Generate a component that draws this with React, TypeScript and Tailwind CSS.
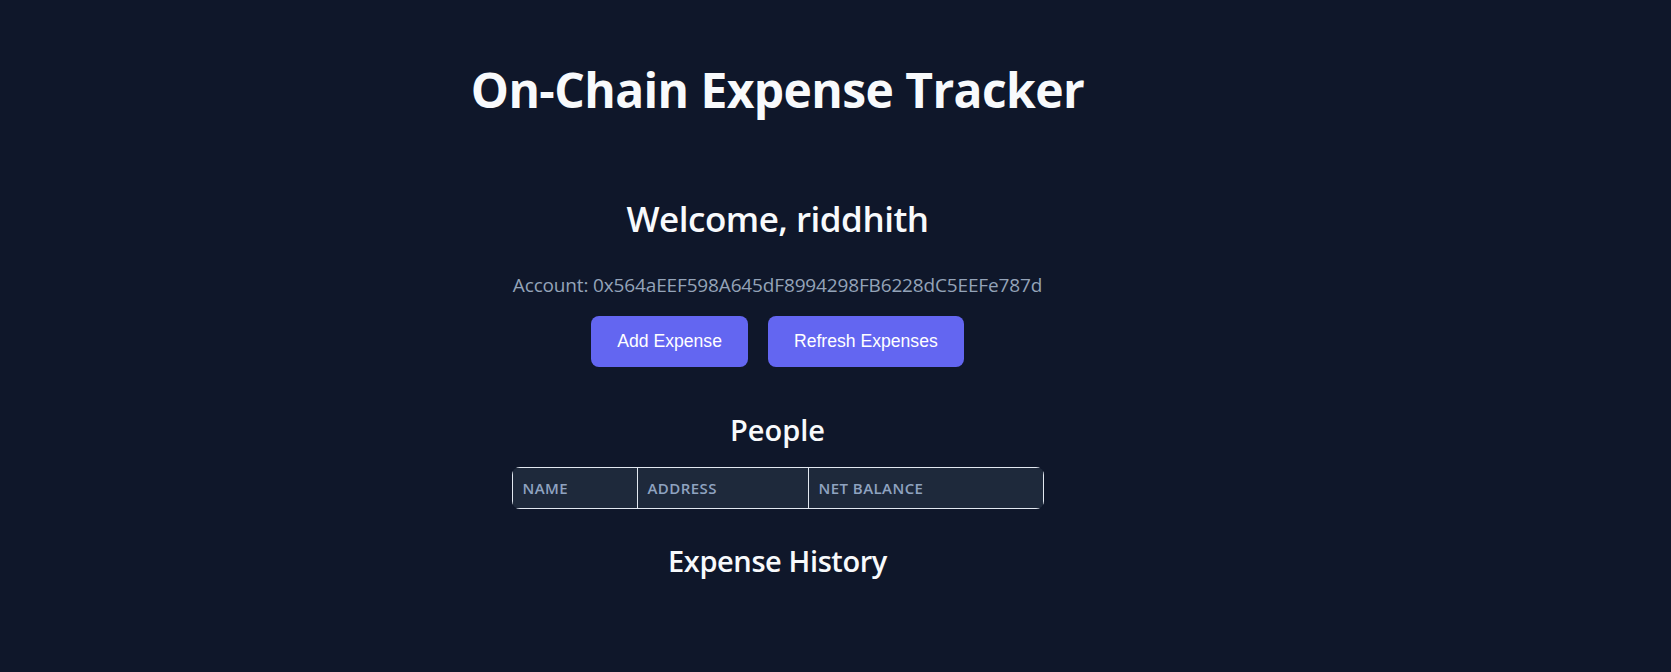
import React from "react";

export default function App() {
  return (
    <div className="min-h-screen w-full bg-[#0f172a] flex justify-center pr-[116px] font-['Open_Sans','Noto_Sans',sans-serif]">
      <div className="flex flex-col items-center pt-[66px]">
        <h1 className="text-[48px] leading-none font-bold tracking-[-0.6px] text-[#f8fafc] whitespace-nowrap">
          On-Chain Expense Tracker
        </h1>
        <div className="w-[532px] flex flex-col items-center">
          <h2 className="mt-[87px] text-[35px] leading-none font-semibold tracking-[-0.5px] text-[#f8fafc] whitespace-nowrap">
            Welcome, riddhith
          </h2>
          <p className="mt-[40px] text-[19px] leading-none tracking-[-0.15px] text-[#94a3b8] whitespace-nowrap">
            Account: 0x564aEEF598A645dF8994298FB6228dC5EEFe787d
          </p>
          <div className="mt-[21px] flex gap-[20px]">
            <button className="h-[51px] px-[26px] rounded-lg bg-[#6366f1] text-white text-[17.6px] font-['Liberation_Sans',Arial,sans-serif]">
              Add Expense
            </button>
            <button className="h-[51px] px-[26px] rounded-lg bg-[#6366f1] text-white text-[17.6px] font-['Liberation_Sans',Arial,sans-serif]">
              Refresh Expenses
            </button>
          </div>
          <h3 className="mt-[48px] text-[29px] leading-none font-semibold text-[#f8fafc]">
            People
          </h3>
          <div className="mt-[23px] w-full rounded-lg overflow-hidden bg-[#1e293b]">
            <table className="w-full table-fixed border-collapse">
              <thead>
                <tr>
                  <th className="w-[125px] h-[41px] border border-[#e2e8f0] px-[10px] text-left text-[15px] leading-none font-semibold tracking-[0.03em] text-[#8fa3c0]">
                    NAME
                  </th>
                  <th className="w-[171px] h-[41px] border border-[#e2e8f0] px-[10px] text-left text-[15px] leading-none font-semibold tracking-[0.03em] text-[#8fa3c0]">
                    ADDRESS
                  </th>
                  <th className="h-[41px] border border-[#e2e8f0] px-[10px] text-left text-[15px] leading-none font-semibold tracking-[0.03em] text-[#8fa3c0]">
                    NET BALANCE
                  </th>
                </tr>
              </thead>
            </table>
          </div>
          <h3 className="mt-[37px] text-[29px] leading-none font-semibold tracking-[-0.4px] text-[#f8fafc]">
            Expense History
          </h3>
        </div>
      </div>
    </div>
  );
}
